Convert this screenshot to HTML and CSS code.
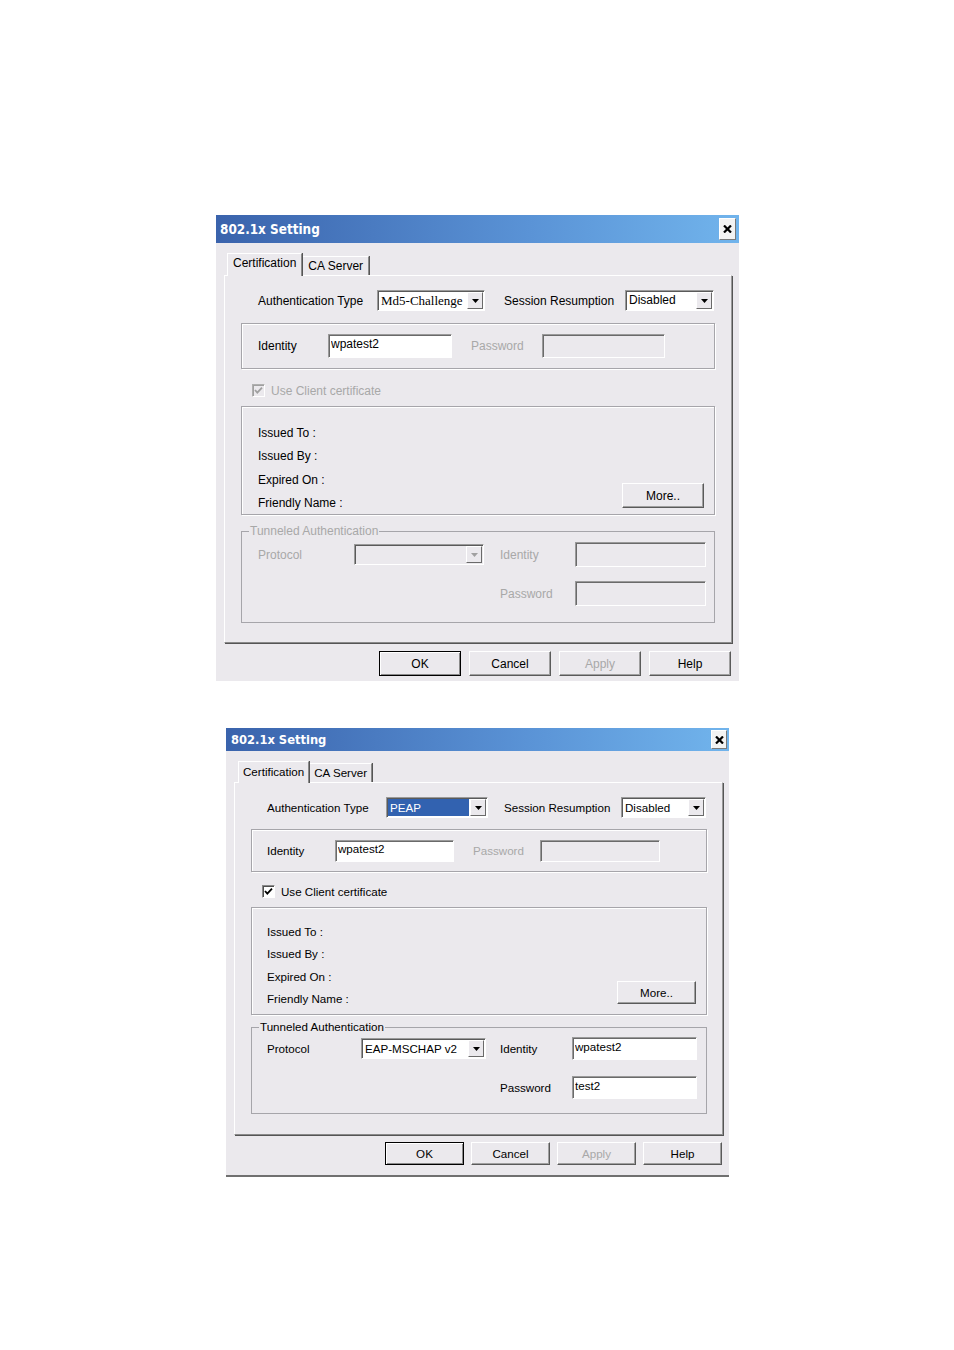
FILE: index.html
```html
<!DOCTYPE html>
<html lang="en">
<head>
    <meta charset="UTF-8">
    <title>802.1x Setting</title>
    <link rel="stylesheet" href="styles.css">
</head>
<body>
<div class="page">

    <!-- first dialog: MD5 challenge, most fields disabled -->
    <div class="dlg dlg-a">
        <div class="dlg-title">
            <span>802.1x Setting</span>
            <span class="close"><svg width="9" height="8" viewBox="0 0 9 8"><path d="M1 0.5 L8 7.5 M8 0.5 L1 7.5" stroke="#000" stroke-width="2.2"/></svg></span>
        </div>
        <div class="dlg-body">
            <div class="tabs">
                <div class="tab tab-active">Certification</div>
                <div class="tab">CA Server</div>
            </div>
            <div class="panel">
                <div class="auth-row">
                    <span class="lbl lbl-auth">Authentication Type</span>
                    <div class="select sel-auth"><span class="sel-text serif">Md5-Challenge</span><span class="sel-btn"><svg width="7" height="4" viewBox="0 0 7 4"><polygon points="0,0 7,0 3.5,4" fill="#000"/></svg></span></div>
                    <span class="lbl lbl-resume">Session Resumption</span>
                    <div class="select sel-resume"><span class="sel-text">Disabled</span><span class="sel-btn"><svg width="7" height="4" viewBox="0 0 7 4"><polygon points="0,0 7,0 3.5,4" fill="#000"/></svg></span></div>
                </div>

                <div class="etched ident-box">
                    <span class="lbl lbl-id">Identity</span>
                    <input class="field" type="text" value="wpatest2" readonly>
                    <span class="lbl lbl-pw off">Password</span>
                    <input class="field" type="text" disabled>
                </div>

                <div class="check-row off">
                    <span class="check check-off"><svg width="9" height="9" viewBox="0 0 9 9"><path d="M1 4 L3.3 6.6 L8 1.6" fill="none" stroke="#a0a0a0" stroke-width="1.8"/></svg></span>
                    Use Client certificate
                </div>

                <div class="etched cert-box">
                    <div class="cert-lines">
                        <div>Issued To :</div>
                        <div>Issued By :</div>
                        <div>Expired On :</div>
                        <div>Friendly Name :</div>
                    </div>
                    <button class="btn btn-more">More..</button>
                </div>

                <fieldset class="tunnel off">
                    <legend>Tunneled Authentication</legend>
                    <div class="tunnel-grid">
                        <span>Protocol</span>
                        <div class="select sel-proto sel-off"><span class="sel-text"></span><span class="sel-btn"><svg width="7" height="4" viewBox="0 0 7 4"><polygon points="0,0 7,0 3.5,4" fill="#a0a0a0"/></svg></span></div>
                        <span class="col-lbl">Identity</span>
                        <input class="field field-t" type="text" disabled>
                        <span></span>
                        <span></span>
                        <span class="col-lbl">Password</span>
                        <input class="field field-t" type="text" disabled>
                    </div>
                </fieldset>
            </div>
            <div class="buttons">
                <button class="btn btn-default">OK</button>
                <button class="btn">Cancel</button>
                <button class="btn" disabled>Apply</button>
                <button class="btn">Help</button>
            </div>
        </div>
    </div>

    <!-- second dialog: PEAP with tunneled auth -->
    <div class="dlg dlg-b">
        <div class="dlg-title">
            <span>802.1x Setting</span>
            <span class="close"><svg width="9" height="8" viewBox="0 0 9 8"><path d="M1 0.5 L8 7.5 M8 0.5 L1 7.5" stroke="#000" stroke-width="2.2"/></svg></span>
        </div>
        <div class="dlg-body">
            <div class="tabs">
                <div class="tab tab-active">Certification</div>
                <div class="tab">CA Server</div>
            </div>
            <div class="panel">
                <div class="auth-row">
                    <span class="lbl lbl-auth">Authentication Type</span>
                    <div class="select sel-auth"><span class="sel-text sel-hl">PEAP</span><span class="sel-btn"><svg width="7" height="4" viewBox="0 0 7 4"><polygon points="0,0 7,0 3.5,4" fill="#000"/></svg></span></div>
                    <span class="lbl lbl-resume">Session Resumption</span>
                    <div class="select sel-resume"><span class="sel-text">Disabled</span><span class="sel-btn"><svg width="7" height="4" viewBox="0 0 7 4"><polygon points="0,0 7,0 3.5,4" fill="#000"/></svg></span></div>
                </div>

                <div class="etched ident-box">
                    <span class="lbl lbl-id">Identity</span>
                    <input class="field" type="text" value="wpatest2" readonly>
                    <span class="lbl lbl-pw off">Password</span>
                    <input class="field" type="text" disabled>
                </div>

                <div class="check-row">
                    <span class="check"><svg width="9" height="9" viewBox="0 0 9 9"><path d="M1 4 L3.3 6.6 L8 1.6" fill="none" stroke="#000" stroke-width="1.8"/></svg></span>
                    Use Client certificate
                </div>

                <div class="etched cert-box">
                    <div class="cert-lines">
                        <div>Issued To :</div>
                        <div>Issued By :</div>
                        <div>Expired On :</div>
                        <div>Friendly Name :</div>
                    </div>
                    <button class="btn btn-more">More..</button>
                </div>

                <fieldset class="tunnel">
                    <legend>Tunneled Authentication</legend>
                    <div class="tunnel-grid">
                        <span>Protocol</span>
                        <div class="select sel-proto"><span class="sel-text">EAP-MSCHAP v2</span><span class="sel-btn"><svg width="7" height="4" viewBox="0 0 7 4"><polygon points="0,0 7,0 3.5,4" fill="#000"/></svg></span></div>
                        <span class="col-lbl">Identity</span>
                        <input class="field field-t" type="text" value="wpatest2" readonly>
                        <span></span>
                        <span></span>
                        <span class="col-lbl">Password</span>
                        <input class="field field-t" type="text" value="test2" readonly>
                    </div>
                </fieldset>
            </div>
            <div class="buttons">
                <button class="btn btn-default">OK</button>
                <button class="btn">Cancel</button>
                <button class="btn" disabled>Apply</button>
                <button class="btn">Help</button>
            </div>
        </div>
    </div>

</div>
</body>
</html>
```

FILE: styles.css
```css
body {
    margin: 0;
    background: #ffffff;
    font-family: "Liberation Sans", Arial, sans-serif;
    font-size: 12px;
    color: #000;
}
.page {
    padding-top: 215px;
}
.dlg {
    background: #ebe9ed;
}
.dlg-a {
    margin-left: 216px;
    width: 523px;
}
.dlg-b {
    margin-left: 226px;
    margin-top: 47px;
    width: 503px;
    font-size: 11.6px;
    border-bottom: 2px solid #707070;
}

/* title bar */
.dlg-title {
    display: flex;
    align-items: center;
    justify-content: space-between;
    height: 28px;
    padding: 0 3px 0 4px;
    background: linear-gradient(to right, #3a63ac, #5a93d6 60%, #71b4ec);
    color: #fff;
    font: bold 13.4px "DejaVu Sans Condensed", "DejaVu Sans", sans-serif;
}
.dlg-b .dlg-title {
    height: 23px;
    padding: 0 2px 0 5px;
    font-size: 12.8px;
}
.close {
    display: flex;
    align-items: center;
    justify-content: center;
    box-sizing: border-box;
    width: 17px;
    height: 22px;
    background: #f3f3f3;
    border: 1px solid;
    border-color: #ffffff #7a7a7a #7a7a7a #ffffff;
}
.dlg-b .close {
    width: 16px;
    height: 19px;
}

.dlg-body {
    padding: 10px 7px 5px 8px;
}
.dlg-b .dlg-body {
    padding: 10px 6px 10px 8px;
}

/* tabs */
.tabs {
    display: flex;
    align-items: flex-end;
    margin-left: 3px;
}
.dlg-b .tabs {
    margin-left: 4px;
}
.tab {
    box-sizing: border-box;
    height: 19px;
    padding: 0 5px;
    border: 1px solid;
    border-bottom: none;
    border-color: #ffffff #8a8a8a transparent #ffffff;
    box-shadow: 1px 0 0 #555;
    line-height: 18px;
    white-space: nowrap;
}
.tab-active {
    position: relative;
    height: 23px;
    margin-bottom: -1px;
    padding-top: 1px;
    background: #ebe9ed;
    line-height: 17px;
}
.dlg-b .tab {
    padding: 0 4px;
}
.dlg-b .tab-active {
    height: 22px;
    padding-top: 1px;
}

.panel {
    border: 1px solid;
    border-color: #ffffff #9a9a9a #8a8a8a #ffffff;
    box-shadow: 1px 1px 0 #555;
    padding: 14px 0 19px;
}
.dlg-b .panel {
    padding: 14px 0 20px;
}

.off {
    color: #a8a8a8;
}
.lbl {
    white-space: nowrap;
}

/* authentication row */
.auth-row {
    display: flex;
    align-items: center;
    height: 21px;
    padding-left: 33px;
}
.lbl-auth {
    width: 119px;
}
.lbl-resume {
    width: 121px;
    margin-left: 19px;
}
.dlg-b .auth-row {
    padding-left: 32px;
}
.dlg-b .lbl-resume {
    width: 117px;
    margin-left: 16px;
}

/* combo boxes */
.select {
    display: flex;
    box-sizing: border-box;
    height: 21px;
    padding: 1px;
    background: #fff;
    border: 1px solid;
    border-color: #9a9a9a #ffffff #ffffff #9a9a9a;
    box-shadow: inset 1px 1px 0 #5a5a5a;
}
.sel-off {
    background: #ebe9ed;
}
.sel-text {
    flex: 1;
    padding: 0 2px;
    line-height: 17px;
    white-space: nowrap;
    overflow: hidden;
}
.sel-hl {
    background: #3262b0;
    color: #fff;
    margin-right: 1px;
}
.serif {
    font-family: "Liberation Serif", "Times New Roman", serif;
    font-size: 13px;
}
.sel-btn {
    display: flex;
    align-items: center;
    justify-content: center;
    box-sizing: border-box;
    width: 16px;
    background: #ebe9ed;
    border: 1px solid;
    border-color: #ffffff #6a6a6a #6a6a6a #ffffff;
}
.sel-auth {
    width: 108px;
}
.sel-resume {
    width: 89px;
}
.dlg-b .sel-auth {
    width: 102px;
}
.dlg-b .sel-resume {
    width: 85px;
}

/* etched group boxes */
.etched {
    border: 1px solid #a6a5aa;
    box-shadow: inset 1px 1px 0 #fff, 1px 1px 0 #fff;
}
.ident-box {
    display: flex;
    align-items: center;
    box-sizing: border-box;
    height: 46px;
    margin: 12px 16px 0;
    padding-left: 16px;
}
.lbl-id {
    width: 70px;
}
.lbl-pw {
    width: 71px;
    margin-left: 19px;
}
.dlg-b .ident-box {
    height: 43px;
    margin: 11px 15px 0 16px;
    padding-left: 15px;
}
.dlg-b .lbl-id {
    width: 68px;
}
.dlg-b .lbl-pw {
    width: 67px;
}

/* text fields */
.field {
    box-sizing: border-box;
    width: 124px;
    height: 24px;
    margin: 0;
    padding: 0 2px 5px;
    border: 1px solid;
    border-color: #9a9a9a #ffffff #ffffff #9a9a9a;
    box-shadow: inset 1px 1px 0 #6a6a6a;
    background: #fff;
    font: inherit;
    color: #000;
    outline: none;
}
.field:disabled {
    background: #ebe9ed;
}
.ident-box .field + .lbl + .field {
    width: 123px;
}
.dlg-b .field {
    width: 119px;
    height: 22px;
    padding-bottom: 4px;
}
.dlg-b .ident-box .field + .lbl + .field {
    width: 120px;
}

/* checkbox */
.check-row {
    display: flex;
    align-items: center;
    gap: 6px;
    height: 13px;
    margin-top: 15px;
    padding-left: 27px;
}
.dlg-b .check-row {
    margin-top: 13px;
}
.check {
    display: flex;
    align-items: center;
    justify-content: center;
    box-sizing: border-box;
    width: 13px;
    height: 13px;
    background: #fff;
    border: 1px solid;
    border-color: #8a8a8a #ffffff #ffffff #8a8a8a;
    box-shadow: inset 1px 1px 0 #505050;
}
.check-off {
    background: #ebe9ed;
    border-color: #b0b0b0 #ffffff #ffffff #b0b0b0;
    box-shadow: inset 1px 1px 0 #a0a0a0;
}

/* certificate info */
.cert-box {
    display: flex;
    justify-content: space-between;
    align-items: flex-end;
    box-sizing: border-box;
    height: 109px;
    margin: 9px 16px 0;
    padding: 15px 10px 6px 16px;
}
.cert-lines {
    align-self: flex-start;
    line-height: 23.3px;
}
.btn-more {
    width: 83px;
}
.dlg-b .cert-box {
    height: 108px;
    margin: 9px 15px 0 16px;
    padding: 13px 10px 10px 15px;
}
.dlg-b .cert-lines {
    line-height: 22.4px;
}

/* tunneled authentication */
.tunnel {
    margin: 9px 16px 0;
    padding: 4px 0 16px;
    border: 1px solid #a6a5aa;
    min-width: 0;
}
.tunnel legend {
    margin-left: 7px;
    padding: 0 1px;
    line-height: 14px;
    background: #ebe9ed;
}
.tunnel-grid {
    display: grid;
    grid-template-columns: 96px 130px 91px 131px;
    grid-template-rows: 25px 25px;
    row-gap: 14px;
    align-items: center;
    padding-left: 16px;
}
.col-lbl {
    padding-left: 16px;
}
.tunnel .field-t {
    width: 131px;
    height: 25px;
}
.sel-proto {
    width: 130px;
}
.dlg-b .tunnel {
    margin: 5px 15px 0 16px;
    padding: 3px 0 14px;
}
.dlg-b .tunnel-grid {
    grid-template-columns: 94px 125px 86px 125px;
    grid-template-rows: 23px 23px;
    row-gap: 16px;
    padding-left: 15px;
}
.dlg-b .col-lbl {
    padding-left: 14px;
}
.dlg-b .tunnel .field-t {
    width: 125px;
    height: 23px;
    padding-bottom: 4px;
}
.dlg-b .sel-proto {
    width: 125px;
    height: 21px;
}

/* push buttons */
.buttons {
    display: flex;
    justify-content: flex-end;
    gap: 8px;
    margin: 8px 1px 0 0;
}
.dlg-b .buttons {
    margin-top: 7px;
    gap: 7px;
}
.btn {
    box-sizing: border-box;
    width: 82px;
    height: 25px;
    padding: 0;
    background: #ebe9ed;
    border: 1px solid;
    border-color: #ffffff #5a5a5a #5a5a5a #ffffff;
    box-shadow: inset -1px -1px 0 #a0a0a0;
    font: inherit;
    color: #000;
}
.btn:disabled {
    color: #a8a8a8;
}
.btn-default {
    border-color: #000;
    box-shadow: inset 1px 1px 0 #fff, inset -1px -1px 0 #8a8a8a;
}
.dlg-b .btn {
    width: 79px;
    height: 23px;
}
.dlg-b .btn-more {
    width: 79px;
}
```
